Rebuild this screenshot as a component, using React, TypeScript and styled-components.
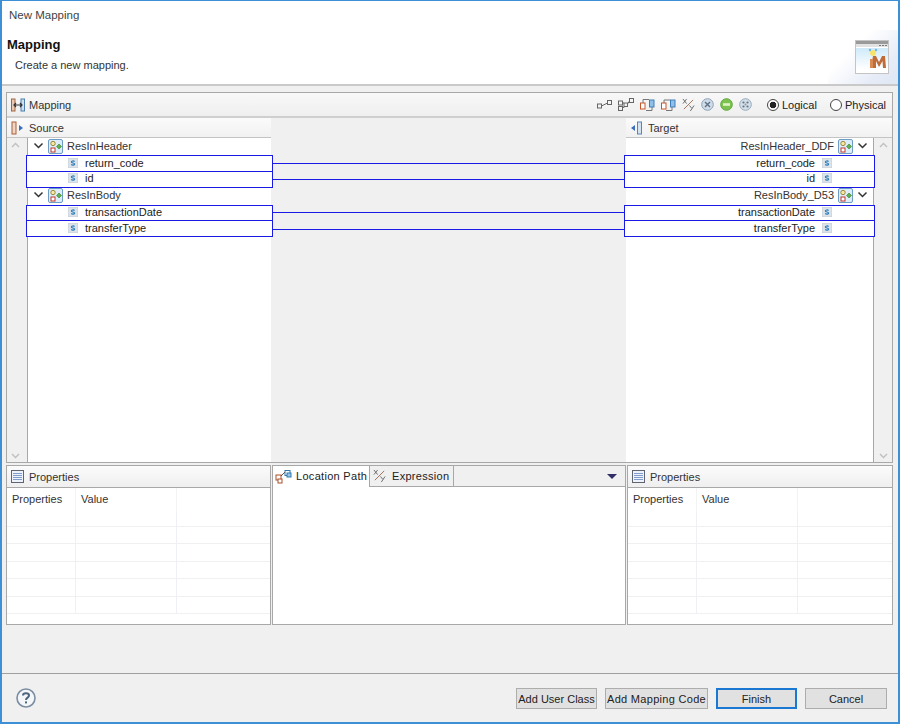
import React from "react";
import styled, { createGlobalStyle } from "styled-components";

const GlobalStyle = createGlobalStyle`
  html, body {
    margin: 0;
    padding: 0;
    background: #fff;
  }
  * {
    box-sizing: border-box;
  }
`;

const Window = styled.div`
  width: 900px;
  height: 724px;
  display: flex;
  flex-direction: column;
  background: #f0f0f0;
  border: 1px solid #3d8fd6;
  border-left-width: 2px;
  border-right-width: 2px;
  border-bottom-width: 2px;
  font-family: "Liberation Sans", Arial, sans-serif;
  font-size: 11px;
  color: #222;
  overflow: hidden;
`;

const TitleBar = styled.div`
  height: 29px;
  flex: none;
  background: #fff;
  padding: 6px 0 0 7px;
  line-height: 17px;
  font-size: 11.5px;
  color: #444;
`;

const Banner = styled.div`
  height: 56px;
  flex: none;
  display: flex;
  justify-content: space-between;
  background: #fff;
  border-bottom: 2px solid #c9c9c9;
`;

const BannerText = styled.div`
  padding: 6px 0 0 5px;
`;

const BannerTitle = styled.div`
  font-weight: 700;
  font-size: 13px;
  line-height: 18px;
  color: #111;
`;

const BannerDesc = styled.div`
  margin: 3px 0 0 8px;
  line-height: 17px;
  color: #333;
`;

const BannerArt = styled.div`
  width: 70px;
  display: flex;
  align-items: flex-start;
  justify-content: flex-end;
  padding: 10px 9px 0 0;
  background: linear-gradient(135deg, #fff 35%, #e6ecf7 75%, #dfe7f5 100%);
`;

const Content = styled.div`
  flex: 1;
  padding: 6px 5px 0 4px;
  display: flex;
  flex-direction: column;
`;

const MappingPanel = styled.div`
  height: 371px;
  flex: none;
  display: flex;
  flex-direction: column;
  background: #f0f0f0;
  border: 1px solid #a8a8a8;
`;

const PanelHeader = styled.div`
  height: 25px;
  flex: none;
  display: flex;
  align-items: center;
  gap: 4px;
  padding: 0 8px 0 4px;
  background: linear-gradient(#f8f8f8, #efefef);
  border-bottom: 2px solid #cfcfcf;
`;

const HeaderTitle = styled.span`
  flex: 1;
  color: #333;
`;

const Tools = styled.div`
  display: flex;
  align-items: center;
  gap: 6px;
  margin-right: 5px;
`;

const RadioLabel = styled.label<{ $w: number }>`
  width: ${(p) => p.$w}px;
  display: flex;
  align-items: center;
  gap: 3px;
  margin-left: 6px;
  color: #222;
`;

const RadioDot = styled.span<{ $on?: boolean }>`
  width: 12px;
  height: 12px;
  flex: none;
  border-radius: 50%;
  border: 1px solid #444;
  background: ${(p) => (p.$on ? "radial-gradient(circle, #222 0 3px, #fff 3.6px)" : "#fff")};
`;

const MapColumns = styled.div`
  flex: 1;
  display: grid;
  grid-template-columns: 264px 355px 1fr;
  min-height: 0;
`;

const Side = styled.div`
  display: flex;
  flex-direction: column;
  min-width: 0;
  position: relative;
  z-index: 1;
`;

const SideHeader = styled.div`
  height: 20px;
  flex: none;
  display: flex;
  align-items: center;
  gap: 5px;
  padding: 1px 0 0 4px;
  background: linear-gradient(#fbfbfb, #f1f1f1);
  border-bottom: 1px solid #c4c4c4;
  color: #333;
`;

const SideBody = styled.div<{ $mirror?: boolean }>`
  flex: 1;
  display: flex;
  flex-direction: ${(p) => (p.$mirror ? "row-reverse" : "row")};
  min-height: 0;
`;

const ScrollGutter = styled.div<{ $mirror?: boolean }>`
  width: ${(p) => (p.$mirror ? "19px" : "21px")};
  flex: none;
  display: flex;
  flex-direction: column;
  justify-content: space-between;
  align-items: center;
  padding: 4px ${(p) => (p.$mirror ? "0" : "4px")} 3px 0;
  background: #f0f0f0;
  border-${(p) => (p.$mirror ? "left" : "right")}: 1px solid #a8a8a8;
`;

const Tree = styled.div`
  flex: 1;
  background: #fff;
  min-width: 0;
  padding-top: 1px;
`;

const NodeRow = styled.div<{ $mirror?: boolean }>`
  height: 16.4px;
  display: flex;
  align-items: center;
  gap: 4px;
  white-space: nowrap;
  justify-content: ${(p) => (p.$mirror ? "flex-end" : "flex-start")};
  padding: ${(p) => (p.$mirror ? "0 5px 2px 0" : "0 0 2px 5px")};
  color: #333;
`;

const LeafRow = styled.div<{ $mirror?: boolean }>`
  height: 16.4px;
  display: flex;
  align-items: center;
  gap: 7px;
  white-space: nowrap;
  position: relative;
  background: #fff;
  border: 1px solid #1a1ae6;
  justify-content: ${(p) => (p.$mirror ? "flex-end" : "flex-start")};
  padding: ${(p) => (p.$mirror ? "0 42px 2px 0" : "0 0 2px 41px")};
  margin-left: -2px;
  margin-right: -2px;
  color: #222;

  & + & {
    height: 17.4px;
    margin-top: -1px;
  }
`;

const Canvas = styled.div`
  position: relative;
  background: #f0f0f0;
`;

const Lines = styled.svg`
  position: absolute;
  inset: 0;
  width: 100%;
  height: 100%;
`;

const LowerRow = styled.div`
  height: 160px;
  flex: none;
  margin-top: 2px;
  display: grid;
  grid-template-columns: 265px 354px 1fr;
  gap: 1px;
`;

const LowerPanel = styled.div`
  display: flex;
  flex-direction: column;
  background: #fff;
  border: 1px solid #a8a8a8;
  min-width: 0;
`;

const PropHeader = styled.div`
  height: 22px;
  flex: none;
  display: flex;
  align-items: center;
  gap: 5px;
  padding-left: 4px;
  background: linear-gradient(#fbfbfb, #efefef);
  border-bottom: 1px solid #a8a8a8;
  color: #333;
`;

const PropTable = styled.div`
  flex: 1;
  display: grid;
  grid-template-columns: 69px 101px 1fr;
  grid-template-rows: 23px 16px repeat(5, 17.4px);
  overflow: hidden;
`;

const PropCell = styled.div<{ $head?: boolean }>`
  padding: 3px 0 0 5px;
  line-height: 17px;
  color: #333;
  border-right: 1px solid ${(p) => (p.$head ? "#f3f3f3" : "#eef0f5")};
  border-bottom: 1px solid ${(p) => (p.$head ? "transparent" : "#eff0f2")};
  &:nth-child(3n) {
    border-right: none;
  }
`;

const TabBar = styled.div`
  height: 21px;
  flex: none;
  display: flex;
  align-items: flex-start;
  background: #f0f0f0;
  border-bottom: 1px solid #a8a8a8;
`;

const Tab = styled.div<{ $active?: boolean; $w: number }>`
  width: ${(p) => p.$w}px;
  display: flex;
  align-items: center;
  gap: ${(p) => (p.$active ? "4px" : "6px")};
  padding: 0 0 ${(p) => (p.$active ? "1px" : "0")} ${(p) => (p.$active ? "2px" : "3px")};
  height: ${(p) => (p.$active ? "21px" : "20px")};
  background: ${(p) => (p.$active ? "#fff" : "#f0f0f0")};
  border-right: 1px solid #a8a8a8;
  color: #222;
  letter-spacing: 0.3px;
  position: relative;
  white-space: nowrap;
`;

const TabSpacer = styled.div`
  flex: 1;
  height: 20px;
  display: flex;
  align-items: center;
  justify-content: flex-end;
  padding-right: 8px;
`;

const Caret = styled.span`
  width: 0;
  height: 0;
  border-left: 5px solid transparent;
  border-right: 5px solid transparent;
  border-top: 5px solid #2f2f66;
`;

const TabBody = styled.div`
  flex: 1;
  background: #fff;
`;

const Footer = styled.div`
  height: 49px;
  margin-top: auto;
  margin-left: -4px;
  margin-right: -5px;
  flex: none;
  display: flex;
  align-items: flex-start;
  padding: 14px 11px 0 14px;
  border-top: 1px solid #a0a0a0;
`;

const HelpSlot = styled.div`
  flex: 1;
`;

const Buttons = styled.div`
  display: flex;
  gap: 8px;
`;

const Button = styled.button<{ $w: number; $primary?: boolean; $wide?: boolean }>`
  width: ${(p) => p.$w}px;
  height: 21px;
  padding: 1px 0 0;
  font: inherit;
  line-height: 17px;
  letter-spacing: ${(p) => (p.$wide ? "0.3px" : "0")};
  white-space: nowrap;
  color: #222;
  background: #e1e1e1;
  border: ${(p) => (p.$primary ? "2px solid #1a78d2" : "1px solid #adadad")};
`;

const IconSvg = styled.svg`
  flex: none;
  display: block;
`;

const BranchChevron = () => (
  <IconSvg width="11" height="8" viewBox="0 0 11 8" fill="none">
    <path d="M1.5 1.5 L5.5 5.5 L9.5 1.5" stroke="#333" strokeWidth="1.5" />
  </IconSvg>
);

const ScrollArrow = ({ down }: { down?: boolean }) => (
  <IconSvg width="9" height="6" viewBox="0 0 9 6" fill="none">
    <path d={down ? "M1 1 L4.5 4.5 L8 1" : "M1 5 L4.5 1.5 L8 5"} stroke="#c0c0c0" strokeWidth="1.4" />
  </IconSvg>
);

const NodeIcon = () => (
  <IconSvg width="15" height="15" viewBox="0 0 15 15">
    <rect x="0.5" y="0.5" width="14" height="14" rx="1.5" fill="#dcecf8" stroke="#6d9cc4" />
    <circle cx="5" cy="4.5" r="2.2" fill="#f6e9a8" stroke="#9b8a3a" />
    <rect x="3" y="9" width="4" height="4" fill="#fff" stroke="#c0392b" />
    <path d="M11 5 L13.5 7.5 L11 10 L8.5 7.5 Z" fill="#5fb04c" stroke="#3b7d2d" strokeWidth="0.6" />
  </IconSvg>
);

const StringIcon = () => (
  <IconSvg width="10" height="10" viewBox="0 0 10 10">
    <rect x="0.3" y="0.3" width="9.4" height="9.4" fill="#dde3ea" stroke="#c3ccd6" strokeWidth="0.6" />
    <path d="M6.6 3.4 C5.6 2.7 3.4 2.8 3.4 4 C3.4 5.2 6.6 4.8 6.6 6 C6.6 7.3 4.2 7.3 3.2 6.6" fill="none" stroke="#2a7cb8" strokeWidth="1.2" />
  </IconSvg>
);

const MappingIcon = () => (
  <IconSvg width="14" height="14" viewBox="0 0 14 14" fill="none">
    <rect x="0.5" y="1" width="3.5" height="12" fill="#e8c9b8" stroke="#a4643f" />
    <rect x="10" y="1" width="3.5" height="12" fill="#cfe0f0" stroke="#4a7fae" />
    <path d="M3 7 H11 M5 5 L3 7 L5 9 M9 5 L11 7 L9 9" stroke="#333" strokeWidth="1.2" />
  </IconSvg>
);

const SourceIcon = () => (
  <IconSvg width="13" height="14" viewBox="0 0 13 14">
    <rect x="1" y="1" width="4" height="12" fill="#f0d5c4" stroke="#a8603a" />
    <path d="M8 4 L12 7 L8 10 Z" fill="#3a6fc0" />
  </IconSvg>
);

const TargetIcon = () => (
  <IconSvg width="13" height="14" viewBox="0 0 13 14">
    <path d="M5 4 L1 7 L5 10 Z" fill="#3a6fc0" />
    <rect x="7.5" y="1" width="4" height="12" fill="#d5e4f2" stroke="#5a86ad" />
  </IconSvg>
);

const ConnectIcon = () => (
  <IconSvg width="15" height="9" viewBox="0 0 15 9" fill="none">
    <rect x="0.5" y="4" width="4" height="4" stroke="#666" />
    <rect x="10.5" y="0.5" width="4" height="4" stroke="#666" />
    <path d="M4.5 6 L10.5 3" stroke="#666" />
  </IconSvg>
);

const ConnectAllIcon = () => (
  <IconSvg width="16" height="14" viewBox="0 0 16 14" fill="none">
    <rect x="0.5" y="3" width="4" height="4" stroke="#666" />
    <rect x="0.5" y="8.5" width="4" height="4" stroke="#666" />
    <rect x="6" y="5" width="3.5" height="3.5" stroke="#666" />
    <rect x="11.5" y="0.5" width="4" height="4" stroke="#666" />
    <path d="M4.5 5 H6 M9.5 6 L11.5 3 M4.5 10 L7 8.5" stroke="#666" />
  </IconSvg>
);

const PairIcon = ({ flip }: { flip?: boolean }) => (
  <IconSvg width="15" height="14" viewBox="0 0 15 14" fill="none">
    <rect x="0.5" y="5" width="4.5" height="6" fill="#fff" stroke="#c8552a" />
    <rect x="9.5" y="2" width="4.5" height="7" fill="#8fc0ea" stroke="#3f7fb8" />
    <path d={flip ? "M3 5 V2 H9 M5 12.5 H11 V9" : "M3 5 V1.5 H9 M6 12.5 H12 V9"} stroke="#777" />
  </IconSvg>
);

const XyIcon = () => (
  <IconSvg width="13" height="14" viewBox="0 0 14 15" fill="none">
    <path d="M1 1 L5 6 M5 1 L1 6" stroke="#666" />
    <path d="M2 12 L12 2" stroke="#a06a50" />
    <path d="M8 8 L10.5 11 M13 8 L9 14" stroke="#666" />
  </IconSvg>
);

const CrossBall = () => (
  <IconSvg width="13" height="13" viewBox="0 0 13 13" fill="none">
    <circle cx="6.5" cy="6.5" r="5.8" fill="#cfdbe6" stroke="#8ba2b8" />
    <path d="M4 4 L9 9 M9 4 L4 9" stroke="#5b7186" strokeWidth="1.4" />
  </IconSvg>
);

const GreenBall = () => (
  <IconSvg width="13" height="13" viewBox="0 0 13 13">
    <circle cx="6.5" cy="6.5" r="5.8" fill="#7cc24f" stroke="#5da53d" />
    <rect x="3" y="5.2" width="7" height="2.6" fill="#dff2c8" />
  </IconSvg>
);

const DotsBall = () => (
  <IconSvg width="13" height="13" viewBox="0 0 13 13">
    <circle cx="6.5" cy="6.5" r="5.8" fill="#d5dfe8" stroke="#96a9bb" />
    <circle cx="4.5" cy="4.5" r="1.1" fill="#5e7488" />
    <circle cx="8.5" cy="4.5" r="1.1" fill="#5e7488" />
    <circle cx="4.5" cy="8.5" r="1.1" fill="#5e7488" />
    <circle cx="8.5" cy="8.5" r="1.1" fill="#5e7488" />
    <circle cx="6.5" cy="6.5" r="1" fill="#8a9cae" />
  </IconSvg>
);

const PropertiesIcon = () => (
  <IconSvg width="13" height="13" viewBox="0 0 13 13" fill="none" shapeRendering="crispEdges">
    <rect x="0.5" y="0.5" width="12" height="12" fill="#eef2fa" stroke="#5f6470" />
    <path d="M2 3.5 H11 M2 5.5 H11 M2 7.5 H11 M2 9.5 H11" stroke="#7f9ccb" />
  </IconSvg>
);

const LocationIcon = () => (
  <IconSvg width="17" height="15" viewBox="0 0 17 15" fill="none">
    <rect x="1" y="6" width="5" height="5" stroke="#a8502a" />
    <rect x="3" y="10" width="4" height="4" fill="#fff" stroke="#a8502a" />
    <rect x="10" y="1.5" width="5" height="5" stroke="#2f78b0" />
    <rect x="12" y="4" width="4" height="4" fill="#9cc6e8" stroke="#2f78b0" />
    <path d="M6 7 L10 3" stroke="#555" />
  </IconSvg>
);

const HelpIcon = () => (
  <IconSvg width="20" height="20" viewBox="0 0 20 20" fill="none">
    <circle cx="10" cy="10" r="9" fill="#f5f6f8" stroke="#7b8da3" strokeWidth="1.6" />
    <path d="M7 7.6 C7 4.6 13 4.6 13 7.6 C13 9.6 10 9.6 10 12" stroke="#4e6580" strokeWidth="2" />
    <rect x="9" y="13.4" width="2" height="2" fill="#4e6580" />
  </IconSvg>
);

const WizardArt = () => (
  <IconSvg width="34" height="34" viewBox="0 0 34 34">
    <defs>
      <linearGradient id="artSky" x1="0" y1="0" x2="0" y2="1">
        <stop offset="0" stopColor="#cfeafa" />
        <stop offset="1" stopColor="#ffffff" />
      </linearGradient>
    </defs>
    <rect x="0.5" y="0.5" width="33" height="33" fill="#fff" stroke="#c4c4c4" />
    <rect x="1" y="1" width="32" height="3" fill="#9a9a9a" />
    <rect x="1" y="4" width="32" height="3" fill="#e2e2e2" />
    <rect x="24" y="5" width="2" height="1" fill="#777" />
    <rect x="27" y="5" width="2" height="1" fill="#777" />
    <rect x="30" y="5" width="2" height="1" fill="#777" />
    <rect x="1" y="8" width="32" height="21" fill="url(#artSky)" />
    <circle cx="18" cy="13" r="3" fill="#f7e36a" />
    <circle cx="15" cy="10" r="1.2" fill="#6db7e6" />
    <circle cx="21" cy="10" r="1.2" fill="#6db7e6" />
    <path d="M16 28 V28 L18 16 H21 L24 22 L27 16 H30 L31 28 H28 L27.5 21 L24 27 L21 21 V28 Z" fill="#c06c38" />
    <rect x="15" y="19" width="3" height="9" fill="#d98a52" />
  </IconSvg>
);

const sourceTree = [
  { name: "ResInHeader", leaves: ["return_code", "id"] },
  { name: "ResInBody", leaves: ["transactionDate", "transferType"] },
];

const targetTree = [
  { name: "ResInHeader_DDF", leaves: ["return_code", "id"] },
  { name: "ResInBody_D53", leaves: ["transactionDate", "transferType"] },
];

const Properties = () => (
  <LowerPanel>
    <PropHeader>
      <PropertiesIcon />
      Properties
    </PropHeader>
    <PropTable>
      <PropCell $head>Properties</PropCell>
      <PropCell $head>Value</PropCell>
      <PropCell $head />
      {Array.from({ length: 18 }).map((_, i) => (
        <PropCell key={i} />
      ))}
    </PropTable>
  </LowerPanel>
);

export default function App() {
  return (
    <>
      <GlobalStyle />
      <Window>
        <TitleBar>New Mapping</TitleBar>
        <Banner>
          <BannerText>
            <BannerTitle>Mapping</BannerTitle>
            <BannerDesc>Create a new mapping.</BannerDesc>
          </BannerText>
          <BannerArt>
            <WizardArt />
          </BannerArt>
        </Banner>
        <Content>
          <MappingPanel>
            <PanelHeader>
              <MappingIcon />
              <HeaderTitle>Mapping</HeaderTitle>
              <Tools>
                <ConnectIcon />
                <ConnectAllIcon />
                <PairIcon />
                <PairIcon flip />
                <XyIcon />
                <CrossBall />
                <GreenBall />
                <DotsBall />
              </Tools>
              <RadioLabel $w={53}>
                <RadioDot $on />
                Logical
              </RadioLabel>
              <RadioLabel $w={54}>
                <RadioDot />
                Physical
              </RadioLabel>
            </PanelHeader>
            <MapColumns>
              <Side>
                <SideHeader>
                  <SourceIcon />
                  Source
                </SideHeader>
                <SideBody>
                  <ScrollGutter>
                    <ScrollArrow />
                    <ScrollArrow down />
                  </ScrollGutter>
                  <Tree>
                    {sourceTree.map((node) => (
                      <React.Fragment key={node.name}>
                        <NodeRow>
                          <BranchChevron />
                          <NodeIcon />
                          {node.name}
                        </NodeRow>
                        {node.leaves.map((leaf) => (
                          <LeafRow key={leaf}>
                            <StringIcon />
                            {leaf}
                          </LeafRow>
                        ))}
                      </React.Fragment>
                    ))}
                  </Tree>
                </SideBody>
              </Side>
              <Canvas>
                <Lines shapeRendering="crispEdges">
                  <line x1="0" x2="100%" y1="45.5" y2="45.5" stroke="#1a1ae6" />
                  <line x1="0" x2="100%" y1="61.5" y2="61.5" stroke="#1a1ae6" />
                  <line x1="0" x2="100%" y1="94.5" y2="94.5" stroke="#1a1ae6" />
                  <line x1="0" x2="100%" y1="111.5" y2="111.5" stroke="#1a1ae6" />
                </Lines>
              </Canvas>
              <Side>
                <SideHeader>
                  <TargetIcon />
                  Target
                </SideHeader>
                <SideBody $mirror>
                  <ScrollGutter $mirror>
                    <ScrollArrow />
                    <ScrollArrow down />
                  </ScrollGutter>
                  <Tree>
                    {targetTree.map((node) => (
                      <React.Fragment key={node.name}>
                        <NodeRow $mirror>
                          {node.name}
                          <NodeIcon />
                          <BranchChevron />
                        </NodeRow>
                        {node.leaves.map((leaf) => (
                          <LeafRow key={leaf} $mirror>
                            {leaf}
                            <StringIcon />
                          </LeafRow>
                        ))}
                      </React.Fragment>
                    ))}
                  </Tree>
                </SideBody>
              </Side>
            </MapColumns>
          </MappingPanel>
          <LowerRow>
            <Properties />
            <LowerPanel>
              <TabBar>
                <Tab $active $w={97}>
                  <LocationIcon />
                  Location Path
                </Tab>
                <Tab $w={84}>
                  <XyIcon />
                  Expression
                </Tab>
                <TabSpacer>
                  <Caret />
                </TabSpacer>
              </TabBar>
              <TabBody />
            </LowerPanel>
            <Properties />
          </LowerRow>
          <Footer>
            <HelpSlot>
              <HelpIcon />
            </HelpSlot>
            <Buttons>
              <Button $w={81}>Add User Class</Button>
              <Button $w={103} $wide>
                Add Mapping Code
              </Button>
              <Button $w={81} $primary>
                Finish
              </Button>
              <Button $w={82}>Cancel</Button>
            </Buttons>
          </Footer>
        </Content>
      </Window>
    </>
  );
}
